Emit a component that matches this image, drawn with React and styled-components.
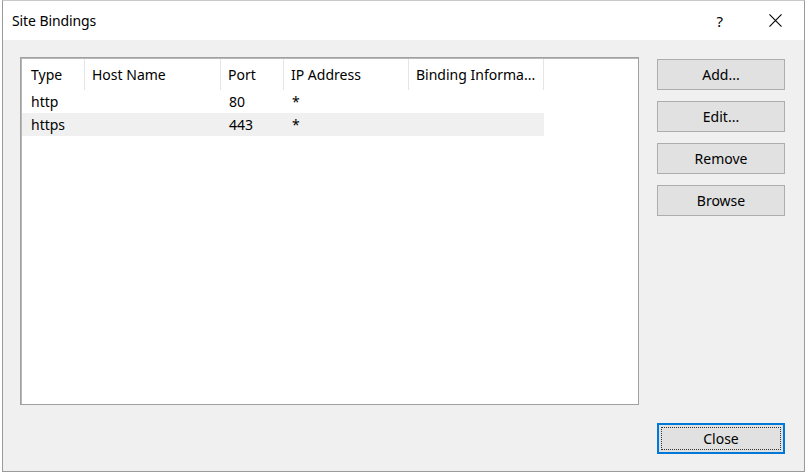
import React from "react";
import styled, { createGlobalStyle } from "styled-components";

const GlobalStyle = createGlobalStyle`
  html, body {
    margin: 0;
    padding: 0;
    background: #ffffff;
  }
  body {
    font-family: "Segoe UI", "Noto Sans", "Open Sans", sans-serif;
    font-size: 15px;
    color: #000;
  }
`;

const columns = [
  { key: "type", label: "Type", width: 63 },
  { key: "host", label: "Host Name", width: 136 },
  { key: "port", label: "Port", width: 63 },
  { key: "ip", label: "IP Address", width: 125 },
  { key: "info", label: "Binding Informa...", width: 135 },
];

const bindings = [
  { type: "http", host: "", port: "80", ip: "*", info: "" },
  { type: "https", host: "", port: "443", ip: "*", info: "" },
];

function App() {
  return (
    <>
      <GlobalStyle />
      <Page>
        <Window>
          <TitleBar>
            <Title>Site Bindings</Title>
            <TitleButtons>
              <HelpGlyph>?</HelpGlyph>
              <CloseGlyph viewBox="0 0 14 14">
                <path d="M0.5 0.5 L13.5 13.5 M13.5 0.5 L0.5 13.5" stroke="#000" strokeWidth="1.2" />
              </CloseGlyph>
            </TitleButtons>
          </TitleBar>
          <Body>
            <ListBox>
              <HeaderRow>
                {columns.map((c) => (
                  <HeaderCell key={c.key} style={{ width: c.width }}>
                    {c.label}
                  </HeaderCell>
                ))}
              </HeaderRow>
              {bindings.map((b, i) => (
                <Row key={b.type} $selected={i === 1}>
                  {columns.map((c) => (
                    <Cell key={c.key} style={{ width: c.width }}>
                      {b[c.key]}
                    </Cell>
                  ))}
                </Row>
              ))}
            </ListBox>
            <ButtonColumn>
              <Button>Add...</Button>
              <Button>Edit...</Button>
              <Button>Remove</Button>
              <Button>Browse</Button>
            </ButtonColumn>
            <Footer>
              <Button $default>
                <FocusRect>Close</FocusRect>
              </Button>
            </Footer>
          </Body>
        </Window>
      </Page>
    </>
  );
}

export default App;

const Page = styled.div`
  width: 807px;
  height: 475px;
  padding: 0 2px 0 2px;
  box-sizing: border-box;
`;

const Window = styled.div`
  width: 803px;
  height: 472px;
  box-sizing: border-box;
  border: 1px solid #9a9a9a;
  border-top-color: #c8c8c8;
  display: flex;
  flex-direction: column;
  background: #f0f0f0;
`;

const TitleBar = styled.div`
  height: 39px;
  background: #ffffff;
  display: flex;
  align-items: center;
  justify-content: space-between;
  padding: 0 22px 0 9px;
  flex-shrink: 0;
`;

const Title = styled.div`
  font-size: 14px;
  letter-spacing: -0.1px;
`;

const TitleButtons = styled.div`
  display: flex;
  align-items: center;
  gap: 46px;
`;

const HelpGlyph = styled.span`
  font-size: 15px;
`;

const CloseGlyph = styled.svg`
  width: 13px;
  height: 13px;
`;

const Body = styled.div`
  flex: 1;
  display: grid;
  grid-template-columns: 619px 128px;
  grid-template-rows: 348px 32px;
  column-gap: 18px;
  row-gap: 18px;
  padding: 17px 18px 0 17px;
`;

const ListBox = styled.div`
  background: #ffffff;
  border: 1px solid #a0a0a0;
  box-shadow: inset 1px 1px 0 #b8b8b8;
  padding: 1px 0 0 1px;
  font-size: 14px;
`;

const HeaderRow = styled.div`
  display: flex;
  height: 31px;
`;

const HeaderCell = styled.div`
  box-sizing: border-box;
  padding: 0 0 0 7px;
  display: flex;
  align-items: center;
  border-right: 1px solid #e5e5e5;
  white-space: nowrap;
  overflow: hidden;
  &:first-child {
    padding-left: 9px;
  }
`;

const Row = styled.div`
  display: flex;
  height: 23px;
  background: ${(p) => (p.$selected ? "#f0f0f0" : "transparent")};
  width: 522px;
`;

const Cell = styled.div`
  box-sizing: border-box;
  padding: 0 0 0 8px;
  display: flex;
  align-items: center;
  white-space: nowrap;
  &:first-child {
    padding-left: 9px;
  }
`;

const ButtonColumn = styled.div`
  display: flex;
  flex-direction: column;
  gap: 11px;
  padding-top: 2px;
`;

const Button = styled.button`
  width: 128px;
  height: 31px;
  box-sizing: border-box;
  background: #e1e1e1;
  border: ${(p) => (p.$default ? "2px solid #0078d7" : "1px solid #adadad")};
  box-shadow: ${(p) => (p.$default ? "none" : "inset 0 0 0 1px #e1e1e1")};
  font-family: "Segoe UI", "Noto Sans", "Open Sans", sans-serif;
  font-size: 14px;
  color: #000;
  padding: ${(p) => (p.$default ? "2px" : "0")};
  display: flex;
  align-items: stretch;
  justify-content: center;
  align-items: center;
`;

const FocusRect = styled.span`
  flex: 1;
  align-self: stretch;
  display: flex;
  align-items: center;
  justify-content: center;
  border: 1px dotted #333;
`;

const Footer = styled.div`
  grid-column: 2;
  display: flex;
  align-items: flex-start;
`;
